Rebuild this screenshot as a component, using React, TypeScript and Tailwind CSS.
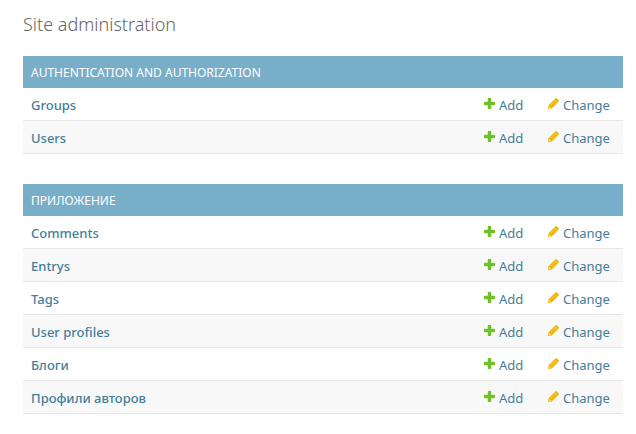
type Section = { name: string; models: string[] };

const sections: Section[] = [
  { name: "Authentication and Authorization", models: ["Groups", "Users"] },
  {
    name: "Приложение",
    models: ["Comments", "Entrys", "Tags", "User profiles", "Блоги", "Профили авторов"],
  },
];

function AddIcon() {
  return (
    <svg className="mb-1 h-[11px] w-[11px] shrink-0" viewBox="0 0 11 11" aria-hidden="true">
      <path
        fill="#70bf2b"
        d="M4.5 0h2q.7 0 .7.7v3.100h3.100q.7 0 .7.7v2q0 .7-.7.7H7.200v3.100q0 .7-.7.7h-2q-.7 0-.7-.7V7.200H.7Q0 7.200 0 6.500v-2q0-.7.7-.7h3.100V.7Q3.800 0 4.500 0Z"
      />
    </svg>
  );
}

function ChangeIcon() {
  return (
    <svg className="mb-1 h-[11px] w-[11px] shrink-0" viewBox="0 0 11 11" aria-hidden="true">
      <path fill="#efb80b" d="M7.200.5q.9-.9 1.800 0l1.500 1.500q.9.900 0 1.800L3.800 10.500 0 11 .5 7.200Z" />
      <path stroke="#fff" strokeOpacity=".45" strokeWidth=".6" fill="none" d="M6.200 1.500l3.300 3.300M2.700 7l3.800-3.800" />
      <path fill="#fff" fillOpacity=".7" d="M1.300 8.200l1.500 1.500-1 .3-.8-.8Z" />
    </svg>
  );
}

function AppModule({ section }: { section: Section }) {
  return (
    <table className="mb-[30px] w-full table-fixed border-separate border-spacing-0">
      <caption className="bg-[#79aec8] px-2 pt-[9px] pb-[7px] text-left text-xs leading-4 font-normal text-white uppercase">
        {section.name}
      </caption>
      <colgroup>
        <col />
        <col className="w-16" />
        <col className="w-[83px]" />
      </colgroup>
      <tbody>
        {section.models.map((model) => (
          <tr key={model} className="h-[33px] even:bg-[#f8f8f8]">
            <th scope="row" className="border-b border-[#e6e6e6] px-2 pt-0.5 text-left font-medium">
              <a href="#" className="text-[#447e9b]">{model}</a>
            </th>
            <td className="border-b border-[#e6e6e6] px-2 pt-0.5">
              <a href="#" className="flex items-center gap-1 text-[#447e9b]">
                <AddIcon />
                Add
              </a>
            </td>
            <td className="border-b border-[#e6e6e6] px-2 pt-0.5">
              <a href="#" className="flex items-center gap-1 text-[#447e9b]">
                <ChangeIcon />
                Change
              </a>
            </td>
          </tr>
        ))}
      </tbody>
    </table>
  );
}

export default function App() {
  return (
    <main className="min-h-screen bg-white pr-[13px] pl-[23px] pt-3 font-['Noto_Sans',sans-serif] text-[13px] leading-4">
      <h1 className="mb-5 text-lg leading-6 font-light text-[#666666]">Site administration</h1>
      {sections.map((section) => (
        <AppModule key={section.name} section={section} />
      ))}
    </main>
  );
}
